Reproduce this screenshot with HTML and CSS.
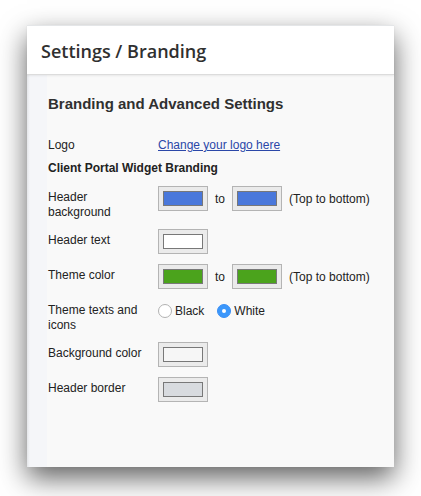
FILE: index.html
```html
<!DOCTYPE html>
<html lang="en">
<head>
<meta charset="utf-8">
<title>Settings / Branding</title>
<link rel="stylesheet" href="styles.css">
</head>
<body>
<div class="window">
  <header class="win-header">
    <h1 class="title">Settings / Branding</h1>
  </header>
  <main class="win-body">
    <h2 class="section-title">Branding and Advanced Settings</h2>
    <div class="logo-row">
      <span class="label">Logo</span>
      <a class="link" href="#">Change your logo here</a>
    </div>
    <h3 class="sub-title">Client Portal Widget Branding</h3>
    <div class="form-grid">
      <div class="label">Header background</div>
      <div class="field">
        <span class="swatch"><span class="swatch-fill blue"></span></span>
        <span>to</span>
        <span class="swatch"><span class="swatch-fill blue"></span></span>
        <span>(Top to bottom)</span>
      </div>

      <div class="label">Header text</div>
      <div class="field">
        <span class="swatch"><span class="swatch-fill white"></span></span>
      </div>

      <div class="label">Theme color</div>
      <div class="field">
        <span class="swatch"><span class="swatch-fill green"></span></span>
        <span>to</span>
        <span class="swatch"><span class="swatch-fill green"></span></span>
        <span>(Top to bottom)</span>
      </div>

      <div class="label">Theme texts and icons</div>
      <div class="radios">
        <label class="radio"><span class="radio-dot"></span>Black</label>
        <label class="radio"><span class="radio-dot checked"></span>White</label>
      </div>

      <div class="label">Background color</div>
      <div class="field">
        <span class="swatch"><span class="swatch-fill offwhite"></span></span>
      </div>

      <div class="label">Header border</div>
      <div class="field">
        <span class="swatch"><span class="swatch-fill grey"></span></span>
      </div>
    </div>
  </main>
</div>
</body>
</html>
```

FILE: styles.css
```css
html, body {
  margin: 0;
  padding: 0;
  background: #ffffff;
}

body {
  font-family: "Liberation Sans", Arial, sans-serif;
  font-size: 12px;
  color: #222;
  padding: 25px 0 29px 27px;
}

.window {
  width: 367px;
  height: 442px;
  display: flex;
  flex-direction: column;
  background: #f9f9f9;
  box-shadow: 0 11px 26px rgba(0, 0, 0, 0.62);
}

.win-header {
  height: 48px;
  flex: none;
  display: flex;
  align-items: center;
  padding-left: 14px;
  background: #ffffff;
  border-top: 1px solid #e4e6e8;
  border-bottom: 1px solid #dcdcdc;
  box-shadow: 0 1px 2px rgba(0, 0, 0, 0.07);
  position: relative;
  z-index: 1;
}

.title {
  margin: 0;
  padding-top: 1px;
  font-family: "Open Sans", sans-serif;
  font-weight: 600;
  font-size: 18px;
  color: #303030;
}

.win-body {
  flex: 1;
  padding: 20px 0 0 21px;
  background: linear-gradient(to right, #e3e5e8 0, #f0f1f4 2px, #f5f6f9 3px, #f5f6f9 20px, #f9f9f9 20px);
}

.section-title {
  margin: 0;
  font-size: 15px;
  line-height: 17px;
  font-weight: bold;
  color: #303030;
}

.logo-row {
  margin-top: 26px;
  display: grid;
  grid-template-columns: 100px auto;
  column-gap: 10px;
  line-height: 14px;
}

.link {
  color: #2b47a8;
  text-decoration: underline;
}

.sub-title {
  margin: 9px 0 0;
  font-size: 12px;
  line-height: 14px;
  font-weight: bold;
  color: #222;
}

.form-grid {
  margin-top: 11px;
  display: grid;
  grid-template-columns: 100px auto;
  column-gap: 10px;
  row-gap: 10px;
  align-items: start;
}

.form-grid .label {
  padding-top: 4px;
  line-height: 14.5px;
}

.field {
  display: flex;
  align-items: center;
  gap: 7px;
  line-height: 14px;
}

.swatch {
  box-sizing: border-box;
  width: 50px;
  height: 25px;
  padding: 4px;
  border: 1px solid #b4b4b4;
  background: #ebebeb;
  display: block;
}

.swatch-fill {
  box-sizing: border-box;
  display: block;
  width: 40px;
  height: 15px;
  border: 1px solid #787878;
}

.blue { background: #4a78db; }
.green { background: #4ba31c; }
.white { background: #ffffff; }
.offwhite { background: #f6f6f6; }
.grey { background: #d8dbdf; }

.radios {
  display: flex;
  align-items: center;
  gap: 13px;
  padding-top: 5px;
  line-height: 14px;
}

.radio {
  display: flex;
  align-items: center;
  gap: 3px;
}

.radio-dot {
  box-sizing: border-box;
  width: 14px;
  height: 14px;
  border-radius: 50%;
  border: 1px solid #b2b2b2;
  background: #ffffff;
  position: relative;
}

.radio-dot.checked {
  border-color: #3a8ff5;
  background: #3b97fb;
}

.radio-dot.checked::after {
  content: "";
  position: absolute;
  left: 4px;
  top: 4px;
  width: 4px;
  height: 4px;
  border-radius: 50%;
  background: #ffffff;
}
```
